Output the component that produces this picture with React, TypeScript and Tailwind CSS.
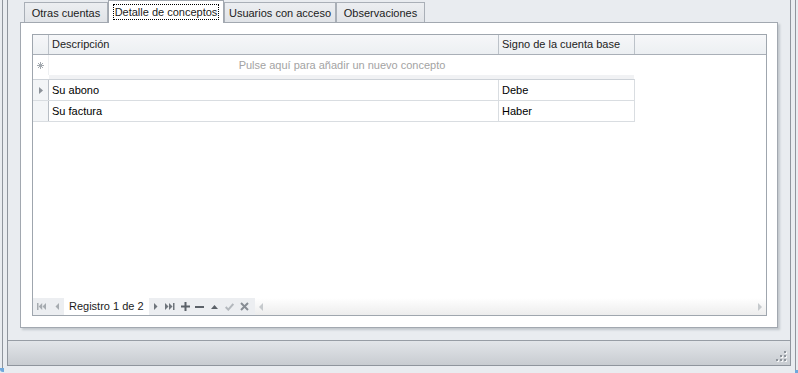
import React from "react";

const tabs = [
  { label: "Otras cuentas", w: "w-[84px]" },
  { label: "Detalle de conceptos", w: "w-[116px]", active: true },
  { label: "Usuarios con acceso", w: "w-[112px]" },
  { label: "Observaciones", w: "w-[89px]" },
];

const rows = [
  { desc: "Su abono", signo: "Debe", current: true },
  { desc: "Su factura", signo: "Haber" },
];

function NavIcon({ w, children }: { w: string; children: React.ReactNode }) {
  return <div className={`${w} flex h-full items-center justify-center`}>{children}</div>;
}

function Navigator() {
  return (
    <div className="flex h-[17px] bg-[#eceef1]">
      <NavIcon w="w-[16px]">
        <svg width="9" height="7" viewBox="0 0 9 7" fill="#a6abb0">
          <rect x="0" y="0" width="1.5" height="7" />
          <path d="M5.2 0 L1.7 3.5 L5.2 7Z" />
          <path d="M9 0 L5.5 3.5 L9 7Z" />
        </svg>
      </NavIcon>
      <NavIcon w="w-[15px]">
        <svg width="4" height="7" viewBox="0 0 4 7" fill="#a6abb0">
          <path d="M4 0 L0.5 3.5 L4 7Z" />
        </svg>
      </NavIcon>
      <div className="flex w-[85px] items-center bg-white pl-[5px] text-[11px] text-[#1b1b1b]">Registro 1 de 2</div>
      <NavIcon w="w-[13px]">
        <svg width="4" height="7" viewBox="0 0 4 7" fill="#6f757c">
          <path d="M0 0 L3.5 3.5 L0 7Z" />
        </svg>
      </NavIcon>
      <NavIcon w="w-[16px]">
        <svg width="10" height="7" viewBox="0 0 10 7" fill="#6f757c">
          <path d="M0 0 L3.5 3.5 L0 7Z" />
          <path d="M4 0 L7.5 3.5 L4 7Z" />
          <rect x="8" y="0" width="1.5" height="7" />
        </svg>
      </NavIcon>
      <NavIcon w="w-[14px]">
        <svg width="9" height="9" viewBox="0 0 9 9" fill="#5b6168">
          <rect x="3.5" y="0" width="2" height="9" />
          <rect x="0" y="3.5" width="9" height="2" />
        </svg>
      </NavIcon>
      <NavIcon w="w-[15px]">
        <svg width="9" height="2" viewBox="0 0 9 2" fill="#5b6168">
          <rect x="0" y="0" width="9" height="2" />
        </svg>
      </NavIcon>
      <NavIcon w="w-[15px]">
        <svg width="7" height="4" viewBox="0 0 7 4" fill="#5b6168">
          <path d="M0 4 L3.5 0 L7 4Z" />
        </svg>
      </NavIcon>
      <NavIcon w="w-[15px]">
        <svg width="9" height="8" viewBox="0 0 9 8" fill="none" stroke="#b3b8bd" strokeWidth="2">
          <path d="M0.7 4 L3.3 6.6 L8.3 1" />
        </svg>
      </NavIcon>
      <NavIcon w="w-[15px]">
        <svg width="9" height="9" viewBox="0 0 9 9" fill="none" stroke="#878d94" strokeWidth="2">
          <path d="M1 1 L8 8 M8 1 L1 8" />
        </svg>
      </NavIcon>
      <div className="w-[3px]" />
      <div className="flex flex-1 items-center justify-between bg-gradient-to-b from-white to-[#ededed] px-[4px]">
        <svg width="4" height="8" viewBox="0 0 4 8" fill="#c6cacd">
          <path d="M4 0 L0 4 L4 8Z" />
        </svg>
        <svg width="4" height="8" viewBox="0 0 4 8" fill="#c6cacd">
          <path d="M0 0 L4 4 L0 8Z" />
        </svg>
      </div>
    </div>
  );
}

function Grid() {
  return (
    <div className="flex h-[282px] w-[735px] flex-col border border-[#9fa6ae] bg-white">
      {/* header */}
      <div className="flex h-[20px] border-b border-[#a9afb7] bg-gradient-to-b from-[#f6f7f9] to-[#eceff2] text-[#222]">
        <div className="w-[16px] border-r border-[#bcc2c9]" />
        <div className="flex w-[450px] items-center border-r border-[#bcc2c9] pl-[3px]">Descripción</div>
        <div className="flex w-[136px] items-center border-r border-[#bcc2c9] pl-[3px]">Signo de la cuenta base</div>
        <div className="flex-1" />
      </div>
      {/* new item row */}
      <div className="flex h-[20px]">
        <div className="flex w-[16px] items-center justify-center border-r border-[#eef0f2]">
          <svg width="7" height="7" viewBox="0 0 7 7" stroke="#a3a9af" strokeWidth="1">
            <path d="M3.5 0 V7 M0 3.5 H7 M1 1 L6 6 M6 1 L1 6" />
          </svg>
        </div>
        <div className="flex w-[586px] items-center justify-center text-[#a3a3a3]">
          Pulse aquí para añadir un nuevo concepto
        </div>
      </div>
      <div className="flex h-[4px]">
        <div className="w-[16px]" />
        <div className="w-[585px] bg-[#f1f2f4]" />
      </div>
      {/* data rows */}
      <div className="w-[602px] border-r border-t border-r-[#d9dde1] border-t-[#cdd2d8]">
        {rows.map((r) => (
          <div key={r.desc} className="flex h-[21px] border-b border-[#d9dde1]">
            <div className="flex w-[16px] items-center justify-center border-r border-[#b8bec5] bg-[#f3f5f7]">
              {r.current && (
                <svg width="4" height="7" viewBox="0 0 4 7" fill="#8c9299">
                  <path d="M0 0 L4 3.5 L0 7Z" />
                </svg>
              )}
            </div>
            <div className="flex w-[450px] items-center border-r border-[#d9dde1] pl-[3px] text-black">{r.desc}</div>
            <div className="flex flex-1 items-center pl-[3px] text-black">{r.signo}</div>
          </div>
        ))}
      </div>
      <div className="flex-1" />
      <Navigator />
    </div>
  );
}

export default function App() {
  return (
    <div className="relative flex h-[373px] w-[798px] overflow-hidden bg-[#e9ecf0] font-['Liberation_Sans',Arial,sans-serif] text-[11px]">
      <div className="w-[2px]" />
      <div className="mb-[2px] w-px bg-[#8f959d]" />
      <div className="w-[4px]" />
      {/* main window */}
      <div className="flex h-[366px] w-[784px] flex-col border-x border-b border-[#8f959d]">
        <div className="flex h-[340px] flex-col pl-[12px]">
          {/* tab strip */}
          <div className="flex h-[22px] items-end pl-[4px]">
            {tabs.map((t) =>
              t.active ? (
                <div
                  key={t.label}
                  className={`${t.w} relative z-10 -mb-px flex h-[23px] items-start justify-center border-x border-t border-[#a2a8b0] bg-white pt-[3px] text-[#1b1b1b]`}
                >
                  <span className="border border-dotted border-black px-px leading-[14px]">{t.label}</span>
                </div>
              ) : (
                <div
                  key={t.label}
                  className={`${t.w} flex h-[20px] items-center justify-center border-x border-t border-[#a9afb7] bg-gradient-to-b from-[#eceef1] to-[#e1e4e8] pt-px text-[#1b1b1b]`}
                >
                  {t.label}
                </div>
              ),
            )}
          </div>
          {/* tab page */}
          <div className="flex h-[306px] w-[758px] flex-col border border-[#a2a8b0] bg-white pl-[11px] pt-[11px] shadow-[2px_2px_2px_rgba(80,90,100,0.25)]">
            <Grid />
          </div>
        </div>
        {/* status bar */}
        <div className="flex h-[25px] items-end justify-end border-t border-[#979da5] bg-gradient-to-b from-[#e2e5e9] to-[#c8ccd1] pb-[3px] pr-[3px]">
          <svg width="11" height="11" viewBox="0 0 11 11">
            <g fill="#ffffff" opacity="0.8">
              <rect x="9" y="1" width="2" height="2" />
              <rect x="5" y="5" width="2" height="2" />
              <rect x="9" y="5" width="2" height="2" />
              <rect x="1" y="9" width="2" height="2" />
              <rect x="5" y="9" width="2" height="2" />
              <rect x="9" y="9" width="2" height="2" />
            </g>
            <g fill="#8e949b">
              <rect x="8" y="0" width="2" height="2" />
              <rect x="4" y="4" width="2" height="2" />
              <rect x="8" y="4" width="2" height="2" />
              <rect x="0" y="8" width="2" height="2" />
              <rect x="4" y="8" width="2" height="2" />
              <rect x="8" y="8" width="2" height="2" />
            </g>
          </svg>
        </div>
      </div>
      <div className="w-[4px]" />
      <div className="w-px bg-[#8f959d]" />
      <div className="absolute bottom-[1px] left-0 h-[4px] w-[4px] rounded-bl-[3px] bg-[#6fa8dc]" />
      <div className="absolute bottom-0 right-0 h-[3px] w-[3px] bg-[#6fa8dc]" />
    </div>
  );
}
